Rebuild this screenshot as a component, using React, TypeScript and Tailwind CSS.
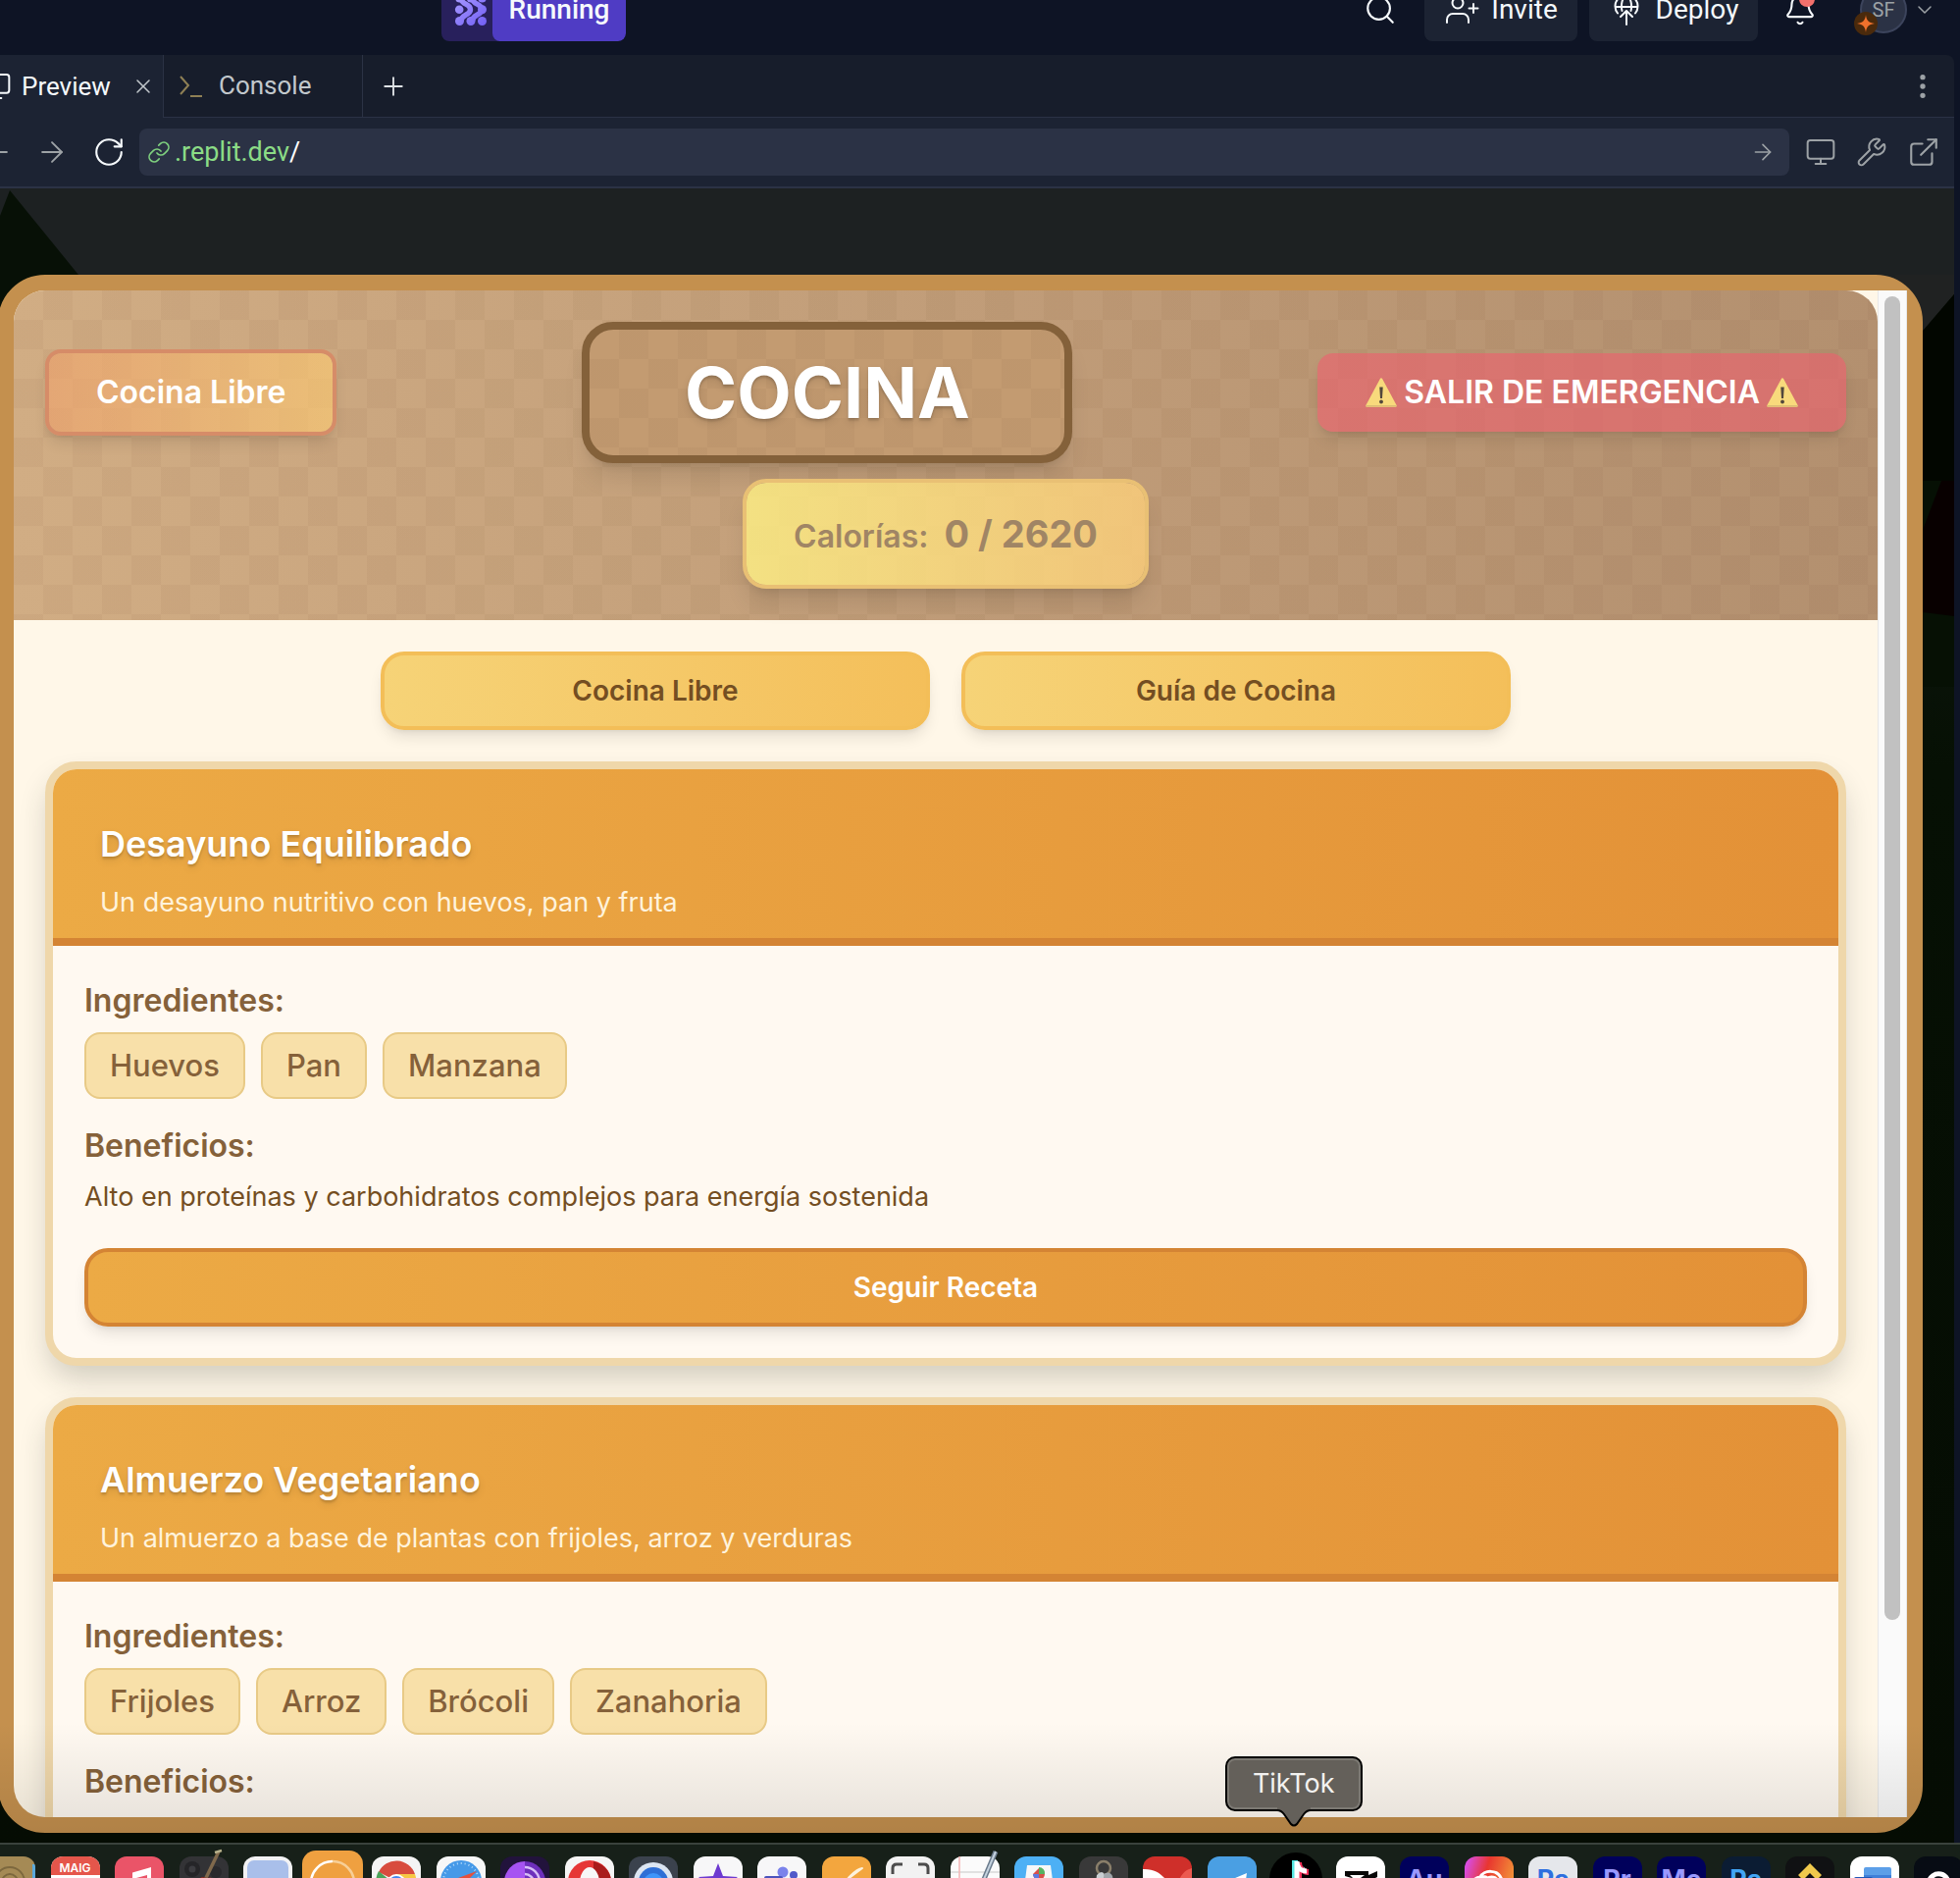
import React from "react";
import {
  ArrowLeft,
  ArrowRight,
  Bell,
  ChevronDown,
  ExternalLink,
  Link,
  Monitor,
  MoreVertical,
  Plus,
  RotateCw,
  Search,
  Wrench,
  X,
} from "lucide-react";

const CHECKER =
  "bg-[repeating-conic-gradient(rgba(80,40,10,0.04)_0_25%,transparent_0_50%)] bg-[length:60px_60px]";

/* ---------- editor chrome ---------- */

function RunLogo() {
  return (
    <svg viewBox="0 0 36 42" className="h-[42px] w-9" aria-hidden="true">
      <defs>
        <linearGradient id="runlogo" gradientUnits="userSpaceOnUse" x1="4" y1="10" x2="34" y2="42">
          <stop offset="0" stopColor="#a99bff" />
          <stop offset="1" stopColor="#7361f5" />
        </linearGradient>
      </defs>
      <g fill="url(#runlogo)">
        <circle cx="8.200" cy="25.700" r="4.300" />
        <circle cx="8.500" cy="37.500" r="4.500" />
        <circle cx="20" cy="37.500" r="4.500" />
        <circle cx="31.500" cy="37.500" r="4.500" />
        <circle cx="8.500" cy="14" r="4.500" />
        <circle cx="20" cy="14" r="4.500" />
        <circle cx="31.500" cy="14" r="4.500" />
        <circle cx="31.500" cy="25.700" r="4.500" />
      </g>
      <g stroke="url(#runlogo)" strokeWidth="5.400" fill="none">
        <path d="M10 37.500c0-7 9.500-5.500 9.500-11.800S10 21 10 14" />
        <path d="M21.500 37.500c0-7 9.500-5.500 9.500-11.800S21.500 21 21.500 14" />
      </g>
    </svg>
  );
}

function InviteIcon() {
  return (
    <svg viewBox="0 0 36 36" className="h-9 w-9 shrink-0" fill="none" stroke="currentColor" strokeWidth="2" strokeLinecap="round" strokeLinejoin="round" aria-hidden="true">
      <circle cx="14" cy="11" r="5.500" />
      <path d="M3 31v-3a6 6 0 0 1 6-6h10a6 6 0 0 1 6 6v3M30 12v9M25.500 16.500h9" />
    </svg>
  );
}

function DeployIcon() {
  return (
    <svg viewBox="0 0 36 36" className="h-9 w-9 shrink-0" fill="none" stroke="currentColor" strokeWidth="2" strokeLinecap="round" strokeLinejoin="round" aria-hidden="true">
      <path d="M9 21.500a11.500 11.500 0 1 1 18 0M7 15h22M13.500 19c-1.500-6 0-13 4.500-16.500 4.500 3.500 6 10.500 4.500 16.500M18 33V19M12 25l6-6 6 6" />
    </svg>
  );
}

function TopBar() {
  return (
    <header className="flex h-14 shrink-0 items-end overflow-hidden bg-[#0e1425] pb-3.5 pl-[450px] pr-6 font-[Roboto,sans-serif] text-[28px] text-[#f5f9fc]">
      <div className="flex h-16 shrink-0 overflow-hidden rounded-lg bg-[#28205c]">
        <span className="flex w-[52px] items-center justify-center pb-2.5 pl-1">
          <RunLogo />
        </span>
        <button className="w-[136px] rounded-lg bg-[#4f3cc4] font-medium">Running</button>
      </div>
      <div className="ml-auto flex h-16 items-center">
        <button aria-label="Search" className="mr-7">
          <Search size={34} strokeWidth={1.5} />
        </button>
        <button className="mr-3 flex h-16 w-[156px] items-center justify-center gap-3 rounded-lg bg-[#1c2333]">
          <InviteIcon />
          Invite
        </button>
        <button className="mr-[26px] flex h-16 w-[172px] items-center justify-center gap-3 rounded-lg bg-[#1c2333]">
          <DeployIcon />
          Deploy
        </button>
        <button aria-label="Notifications" className="relative mr-11">
          <Bell size={34} strokeWidth={1.5} />
          <span className="absolute right-0.5 -top-0.5 size-4 rounded-full bg-[#f2706c]" />
        </button>
        <button aria-label="Account" className="flex items-center gap-1.5 text-[#9da2a6]">
          <span className="relative flex size-12 items-center justify-center rounded-full border-2 border-[#3c445c] bg-[#2b3245] text-[20px]">
            SF
            <span className="absolute -bottom-1 -left-2 flex size-6 items-center justify-center rounded-full bg-[#4a2a0c]">
              <svg viewBox="0 0 18 18" className="size-[18px]" fill="#f0712c" aria-hidden="true">
                <path d="M9 0c.6 5.500 2.500 8 9 9-6.500 1-8.400 3.500-9 9-.6-5.500-2.500-8-9-9 6.500-1 8.400-3.500 9-9z" />
              </svg>
            </span>
          </span>
          <ChevronDown size={24} strokeWidth={1.5} />
        </button>
      </div>
    </header>
  );
}

function TabBar() {
  return (
    <nav className="flex h-16 shrink-0 rounded-tr-lg bg-[#171d2b] font-[Roboto,sans-serif] text-[26px]">
      <div className="flex w-[167px] shrink-0 items-center border-r border-[#2b3245] bg-[#1c2333] text-[#f5f9fc]">
        <Monitor size={32} strokeWidth={1.5} className="-ml-5 shrink-0" />
        <button className="ml-2.5">Preview</button>
        <button aria-label="Close tab" className="ml-auto mr-2 text-[#c2c8cc]">
          <X size={24} strokeWidth={1.5} />
        </button>
      </div>
      <div className="flex min-w-0 flex-1 border-b border-[#2b3245]">
        <button className="flex w-[203px] shrink-0 items-center gap-4 border-r border-[#2b3245] pl-4 text-[#c2c8cc]">
          <svg viewBox="0 0 24 24" className="size-6" fill="none" stroke="#8f8055" strokeWidth="2" aria-hidden="true">
            <path d="m1 2 8 9-8 9M11 22h12" />
          </svg>
          Console
        </button>
        <button aria-label="New tab" className="ml-4 text-[#dfe3e6]">
          <Plus size={30} strokeWidth={1.5} />
        </button>
        <button aria-label="More options" className="ml-auto mr-4 text-[#9da2a6]">
          <MoreVertical size={32} />
        </button>
      </div>
    </nav>
  );
}

function AddressBar() {
  return (
    <div className="flex h-[72px] shrink-0 items-center border-b-2 border-[#2b3245] bg-[#1c2333] text-[#9da2a6]">
      <button aria-label="Back" className="-ml-5">
        <ArrowLeft size={34} strokeWidth={1.3} />
      </button>
      <button aria-label="Forward" className="ml-[22px]">
        <ArrowRight size={34} strokeWidth={1.3} />
      </button>
      <button aria-label="Reload" className="ml-6 text-[#f5f9fc]">
        <RotateCw size={34} strokeWidth={1.5} />
      </button>
      <div className="ml-3.5 flex h-12 min-w-0 flex-1 items-center rounded-lg bg-[#2b3245] pl-2 pr-3.5 font-[Roboto,sans-serif] text-[27px]">
        <Link size={24} strokeWidth={1.7} className="text-[#7ecf7e]" />
        <span className="ml-1 text-[#8bdc86]">.replit.dev</span>
        <span className="text-white">/</span>
        <button aria-label="Go" className="ml-auto">
          <ArrowRight size={26} strokeWidth={1.5} />
        </button>
      </div>
      <div className="ml-4 mr-3.5 flex gap-5">
        <button aria-label="Device"><Monitor size={32} strokeWidth={1.5} /></button>
        <button aria-label="Tools"><Wrench size={32} strokeWidth={1.5} /></button>
        <button aria-label="Open in new tab"><ExternalLink size={34} strokeWidth={1.5} /></button>
      </div>
    </div>
  );
}

/* ---------- kitchen dialog ---------- */

function Warning() {
  return (
    <svg viewBox="0 0 34 32" className="h-8 w-[34px]" aria-hidden="true">
      <path d="M17 2.500 31.500 29.500h-29z" fill="#f8da7c" stroke="#f8da7c" strokeWidth="2.500" strokeLinejoin="round" />
      <path d="M1.500 29.800h31" stroke="#dcbc74" strokeWidth="1.500" />
      <path d="M15.300 10.500h3.400l-.7 11.500h-2z" fill="#52483c" />
      <circle cx="17" cy="25.500" r="1.900" fill="#52483c" />
    </svg>
  );
}

function KitchenHeader() {
  return (
    <div className={`${CHECKER} rounded-tr-[32px]`}>
      <div className="flex flex-col items-center gap-4 p-8">
        <div className="flex w-full items-center justify-between">
          <button className="rounded-2xl border-4 border-[#d68c68] bg-linear-to-r from-[#f1a36c]/60 to-[#ffcd71]/60 bg-clip-padding px-12 py-4 text-[32px] leading-[48px] font-semibold text-white shadow-lg">
            Cocina Libre
          </button>
          <h1 className={`${CHECKER} w-[500px] rounded-[32px] border-8 border-[#84613a] bg-[#c39b71] bg-clip-padding py-4 text-center text-[72px] leading-[96px] font-bold text-white shadow-xl text-shadow-lg`}>
            COCINA
          </h1>
          <button className="flex items-center gap-1.5 rounded-2xl bg-[#ee5f6e]/60 px-12 py-4 text-[32px] leading-[48px] font-semibold text-white shadow-lg">
            <Warning />
            SALIR DE EMERGENCIA
            <Warning />
          </button>
        </div>
        <div className="flex items-baseline gap-4 rounded-3xl border-4 border-[#e9c074] bg-linear-to-r from-[#fff184]/80 to-[#fdcf7b]/80 bg-clip-padding px-12 py-6 text-[#a08565] shadow-xl">
          <span className="text-[32px] leading-[48px] font-semibold">Calorías:</span>
          <span className="text-[38px] leading-[56px] font-bold">0 / 2620</span>
        </div>
      </div>
    </div>
  );
}

type Recipe = { title: string; summary: string; items: string[]; benefits: string };

const RECIPES: Recipe[] = [
  {
    title: "Desayuno Equilibrado",
    summary: "Un desayuno nutritivo con huevos, pan y fruta",
    items: ["Huevos", "Pan", "Manzana"],
    benefits: "Alto en proteínas y carbohidratos complejos para energía sostenida",
  },
  {
    title: "Almuerzo Vegetariano",
    summary: "Un almuerzo a base de plantas con frijoles, arroz y verduras",
    items: ["Frijoles", "Arroz", "Brócoli", "Zanahoria"],
    benefits: "",
  },
];

function RecipeCard({ title, summary, items, benefits }: Recipe) {
  return (
    <article className="overflow-hidden rounded-[32px] border-8 border-[#efd7aa] bg-[#fff9f1] shadow-[0_16px_30px_-4px_rgba(40,50,40,0.22)]">
      <div className="flex flex-col gap-3 border-b-8 border-[#d48434] bg-linear-to-r from-[#ecaa45] to-[#e39137] px-12 pt-12 pb-4">
        <h2 className="text-[36px] leading-[56px] font-semibold text-white text-shadow-lg">{title}</h2>
        <p className="text-[27px] leading-10 text-[#fff3dc]">{summary}</p>
      </div>
      <div className="p-8">
        <h3 className="text-[32px] leading-[48px] font-semibold text-[#85613a]">Ingredientes:</h3>
        <ul className="mt-2 flex flex-wrap gap-4">
          {items.map((item) => (
            <li key={item} className="rounded-2xl border-2 border-[#e8ca86] bg-[#f8e0a9] px-6 py-2 text-[31px] leading-[48px] font-medium text-[#85613a]">
              {item}
            </li>
          ))}
        </ul>
        <h3 className="mt-6 text-[32px] leading-[48px] font-semibold text-[#85613a]">Beneficios:</h3>
        <p className="mt-2 min-h-10 text-[27px] leading-10 text-[#744e22]">{benefits}</p>
        <button className="mt-8 w-full rounded-3xl border-4 border-[#d48434] bg-linear-to-r from-[#ecaa45] to-[#e39137] py-4 text-[28px] leading-10 font-semibold text-white shadow-lg">
          Seguir Receta
        </button>
      </div>
    </article>
  );
}

function KitchenDialog() {
  const choice =
    "h-20 rounded-3xl border-4 border-[#f3be58] bg-linear-to-r from-[#f6d377] to-[#f4bf5a] text-[28px] font-semibold text-[#744e22] shadow-lg";
  return (
    <section className="relative -ml-0.5 mr-8 mt-[88px] mb-2.5 flex min-h-0 flex-1 rounded-[48px] border-16 border-[#c4904e] bg-[#c4904e] font-[Inter,sans-serif]">
      <div className="min-w-0 flex-1 overflow-hidden rounded-l-[32px] bg-[#fff7e8]">
        <div className="rounded-tr-[32px] bg-linear-to-r from-[#d1ad84] via-[#c19d79] to-[#b3906f]">
          <KitchenHeader />
        </div>
        <div className="flex flex-col gap-8 p-8">
          <div className="mx-auto grid w-full max-w-[1152px] grid-cols-2 gap-8">
            <button className={choice}>Cocina Libre</button>
            <button className={choice}>Guía de Cocina</button>
          </div>
          {RECIPES.map((r) => (
            <RecipeCard key={r.title} {...r} />
          ))}
        </div>
      </div>
      <div className="w-[30px] shrink-0 border-x border-[#e8e8e8] bg-[#fafafa] pt-1.5">
        <div className="mx-auto h-[87%] w-4 rounded-full bg-[#c1c1c1]" />
      </div>
      <div className="pointer-events-none absolute -inset-x-4 -bottom-4 h-28 rounded-b-[48px] bg-linear-to-t from-black/10 to-transparent" />
    </section>
  );
}

function Stage() {
  return (
    <main className="relative flex min-h-0 flex-1 flex-col overflow-hidden bg-linear-to-b from-[#1c1f22] via-[#061004] via-35% to-[#050c03]">
      <svg className="absolute left-0 top-0 h-[160px] w-[120px]" viewBox="0 0 120 160" aria-hidden="true">
        <rect width="120" height="160" fill="#1d2122" />
        <path d="M10 2 106 120v40H0V28z" fill="#071006" />
      </svg>
      <div className="absolute left-[120px] right-0 top-0 h-[110px] bg-[#1d2122]" />
      <svg className="absolute right-0 top-[88px] h-[420px] w-[60px]" viewBox="0 0 60 420" aria-hidden="true">
        <rect width="60" height="420" fill="#061004" />
        <path d="M0 0h60v20L0 90z" fill="#202222" />
        <path d="M60 20v190H0V90z" fill="#020600" />
        <path d="M47 210h13v138l-32-4v-84z" fill="#080000" />
      </svg>
      <KitchenDialog />
    </main>
  );
}

/* ---------- dock ---------- */

function Tile({ bg, children }: { bg: string; children?: React.ReactNode }) {
  return (
    <svg viewBox="0 0 50 50" className="size-[50px] shrink-0 overflow-hidden rounded-xl" aria-hidden="true">
      <rect width="50" height="50" fill={bg} />
      {children}
    </svg>
  );
}

function LetterTile({ className, children }: { className: string; children: React.ReactNode }) {
  return (
    <span className={`flex size-[50px] shrink-0 justify-center rounded-xl pt-2 text-[27px] leading-8 font-bold ${className}`}>
      {children}
    </span>
  );
}

function Dock() {
  return (
    <footer className="relative h-9 shrink-0 border-t-2 border-[#3a423c] bg-[#172019] font-[Inter,sans-serif]">
      <div className="absolute inset-x-0 top-0 h-[34px] overflow-hidden">
        <div className="-ml-3.5 -mr-[3px] flex justify-between pt-3">
          <Tile bg="#a58a55">
            <circle cx="24" cy="26" r="15" fill="none" stroke="#7d683e" strokeWidth="2" />
            <circle cx="24" cy="26" r="8" fill="none" stroke="#7d683e" strokeWidth="2" />
            <path d="M47 8h3v42h-3z" fill="#5aa9dc" />
          </Tile>
          <span className="flex size-[50px] shrink-0 flex-col items-center overflow-hidden rounded-xl bg-white">
            <span className="h-[19px] w-full bg-[#e5564b] pt-1 text-center text-[12px] leading-[15px] font-semibold text-white">MAIG</span>
            <span className="text-[26px] leading-7 text-[#333]">18</span>
          </span>
          <Tile bg="#ea5468">
            <path d="M18 16.500 37 11v26h-4V19l-11 3v20h-4z" fill="#fff" />
          </Tile>
          <svg viewBox="0 0 50 58" className="-mt-2 h-[58px] w-[50px] shrink-0" aria-hidden="true">
            <rect y="8" width="50" height="50" rx="12" fill="#333336" />
            <circle cx="13" cy="21" r="8" fill="#252528" />
            <circle cx="13" cy="21" r="3.500" fill="#3d3d41" />
            <circle cx="37" cy="24" r="6" fill="#29292c" />
            <path d="m40 3-14 29" stroke="#80694c" strokeWidth="3.500" />
            <path d="m36 4 7-2" stroke="#b8b28c" strokeWidth="2.500" />
            <path d="M20 32c2-5 6-2 8-2s6-2 5 3l3 25H18z" fill="#8e2e22" />
          </svg>
          <Tile bg="#f2f2f4">
            <rect x="4" y="4" width="42" height="50" rx="7" fill="#a9bfea" />
          </Tile>
          <svg viewBox="0 0 62 62" className="-mx-1.5 -mt-1.5 size-[62px] shrink-0" aria-hidden="true">
            <rect width="62" height="62" rx="14" fill="#efa040" />
            <path d="M9 34a22 22 0 0 1 22-23" fill="none" stroke="#fff" strokeWidth="2.500" />
            <path d="M31 11a22 22 0 0 1 22 23" fill="none" stroke="#f7cf98" strokeWidth="2.500" />
            <rect x="19" y="29" width="17" height="16" rx="3" fill="#fff" />
            <path d="m37 34 7-5v16l-7-6z" fill="#fff" />
          </svg>
          <Tile bg="#f4f4f4">
            <path d="M25 25 7 16A20 20 0 0 1 44 18H25z" fill="#d84c3e" />
            <path d="M7 15a20 20 0 0 0 15 30l6-18-10-3z" fill="#4ba45a" />
            <path d="M25 18h19a20 20 0 0 1-21 27z" fill="#f6c844" />
            <circle cx="25" cy="28" r="10" fill="#fff" />
            <circle cx="25" cy="28" r="8" fill="#4486ee" />
          </Tile>
          <Tile bg="#f7f7f7">
            <circle cx="25" cy="25" r="21" fill="#4599e8" />
            <circle cx="25" cy="25" r="18" fill="none" stroke="#b6dcfa" strokeWidth="2" strokeDasharray="1 3" />
            <path d="M41 15 22 22l6 6z" fill="#e5503c" />
            <path d="m22 22 6 6-18 11z" fill="#eee" />
          </Tile>
          <Tile bg="#22133c">
            <path d="M25 5a21 21 0 0 0 0 42z" fill="#a653f2" />
            <path d="M25 5a21 21 0 0 1 0 42z" fill="#6e2fbc" />
            <path d="M25 11a15 15 0 0 1 15 15M25 18a9 9 0 0 1 9 9" fill="none" stroke="#d6bcf7" strokeWidth="2.500" />
          </Tile>
          <Tile bg="#f5f5f5">
            <circle cx="25" cy="26" r="22" fill="#e63636" />
            <path d="M29 5c24 6 24 36 0 42z" fill="#a91c1c" />
            <ellipse cx="25" cy="27" rx="10" ry="16" fill="#f7f7f7" />
          </Tile>
          <Tile bg="#3b424d">
            <circle cx="25" cy="26" r="20" fill="#dbe5f2" />
            <circle cx="25" cy="26" r="15" fill="#2e6fd6" />
            <circle cx="25" cy="27" r="10" fill="#3f95fa" />
            <circle cx="25" cy="29" r="3.500" fill="#e8f4ff" />
          </Tile>
          <Tile bg="#f7f7f8">
            <path d="m25 7 5 13 15 1-12 9 4 15-12-8-12 8 4-15-12-9 15-1z" fill="#6d3ad0" />
          </Tile>
          <Tile bg="#f7f7f8">
            <circle cx="26" cy="16" r="5.500" fill="#7b83eb" />
            <circle cx="37" cy="19" r="4" fill="#5059c9" />
            <path d="M21 23h21v20H21z" fill="#7b83eb" />
            <rect x="7" y="20" width="19" height="22" rx="2" fill="#4b53bc" />
            <path d="M12 26h9M16.500 26v12" stroke="#fff" strokeWidth="2.500" />
          </Tile>
          <Tile bg="#f3a63e">
            <path d="M41 12c-7 1-17 12-22 21l-7-5 9-1z" fill="#fdf2dc" stroke="#fdf2dc" strokeWidth="2" strokeLinejoin="round" />
          </Tile>
          <Tile bg="#f2f2f2">
            <path d="M7 18v-6q0-4 4-4h6M33 8h6q4 0 4 4v6" fill="none" stroke="#4c4c4c" strokeWidth="3" />
            <path d="M13 27h6l3-5h6l3 5h6v20H13z" fill="#4c4c4c" />
            <circle cx="25" cy="34" r="6" fill="#ddd" />
          </Tile>
          <svg viewBox="0 0 50 58" className="-mt-2 h-[58px] w-[50px] shrink-0" aria-hidden="true">
            <rect y="8" width="50" height="50" rx="12" fill="#fbfbfb" />
            <path d="M0 24h50M0 33h50" stroke="#d9d9d9" strokeWidth="1.500" />
            <path d="M9 8v50" stroke="#f3b4b4" strokeWidth="1.500" />
            <path d="M46 3 32 36" stroke="#6a7a8c" strokeWidth="5" />
            <path d="M46 3 32 36" stroke="#c5d3df" strokeWidth="2" />
          </svg>
          <Tile bg="#4db0f5">
            <path d="M13 9h24l4 30H9z" fill="#f6f7f8" />
            <path d="M25 12a6 6 0 1 1-6 6z" fill="#d8504a" />
            <path d="M25 11a6 6 0 0 1 6 7h-6z" fill="#55b463" />
            <path d="M19 18a6 6 0 0 0 6 6v-6z" fill="#5c7ae0" />
            <path d="M14 27h22" stroke="#4d6f9a" strokeWidth="2" />
          </Tile>
          <Tile bg="#393939">
            <circle cx="25" cy="12" r="7" fill="none" stroke="#8a7f6a" strokeWidth="2.500" />
            <path d="M18 19q6-6 8 0l-3 27h-8z" fill="#c9ced1" />
            <path d="M25 18q6-4 9 2l5 26h-9z" fill="#9fa5a9" />
          </Tile>
          <Tile bg="#cf2f2a">
            <path d="M0 13c16-1 25 10 29 21l11-8-5 24H22C20 32 10 23 0 23z" fill="#fff" />
            <path d="M50 12c-8 2-12 8-14 15l14-3z" fill="#ec5a50" />
          </Tile>
          <Tile bg="#4a9fe3">
            <path d="M40 17 9 30l9 4 3 10 6-6 9 7z" fill="#fff" />
          </Tile>
          <svg viewBox="0 0 54 54" className="-mx-0.5 -mt-1 size-[54px] shrink-0" aria-hidden="true">
            <circle cx="27" cy="27" r="27" fill="#000" />
            <path d="M26 8v27a5 5 0 1 1-5-5M26 8c0 6 4 10 10 10" fill="none" stroke="#55e7e2" strokeWidth="6" />
            <path d="M30 10v27a5 5 0 1 1-5-5M30 10c0 6 4 10 10 10" fill="none" stroke="#f5315a" strokeWidth="6" />
            <path d="M28 9v27a5 5 0 1 1-5-5M28 9c0 6 4 10 10 10" fill="none" stroke="#fff" strokeWidth="5" />
          </svg>
          <Tile bg="#fff">
            <path d="M9 15h24v4l9-4v6L9 37v-6h24v-4L9 20z" fill="#080808" />
            <path d="M14 19h15l-4 3H17z" fill="#fff" />
          </Tile>
          <LetterTile className="bg-[#00005b] text-[#9999ff]">Au</LetterTile>
          <Tile bg="url(#cloud)">
            <defs>
              <linearGradient id="cloud" x1="0" y1="0.300" x2="1" y2="0.600">
                <stop offset="0" stopColor="#d84ce0" />
                <stop offset="0.400" stopColor="#e8362f" />
                <stop offset="1" stopColor="#f39a38" />
              </linearGradient>
            </defs>
            <path d="M17 40a9 9 0 0 1-1-19c3-7 18-9 22 3 7 5 3 16-4 16M16 21c7-2 10 3 13 8M22 24c4-5 11-3 12 2" fill="none" stroke="#fff" strokeWidth="3" />
          </Tile>
          <LetterTile className="bg-[#e5e7eb] text-[#2e6fdf]">Ps</LetterTile>
          <LetterTile className="bg-[#00005b] text-[#9999ff]">Pr</LetterTile>
          <LetterTile className="bg-[#00005b] text-[#9999ff]">Me</LetterTile>
          <LetterTile className="bg-[#0b1c33] text-[#42a5f5]">Ps</LetterTile>
          <Tile bg="#101113">
            <path d="m25 7 12 12-5 5-7-7-7 7-5-5z" fill="#f0c94c" />
            <path d="m25 22 5 5-5 5-5-5zM8 26l4 4-4 4zM42 26l-4 4 4 4z" fill="#f0c94c" />
          </Tile>
          <Tile bg="#fff">
            <rect x="14" y="11" width="28" height="32" rx="2" fill="#5c9fe8" />
            <path d="M14 19h28v9H14z" fill="#3f7fd8" />
            <rect x="4" y="21" width="19" height="20" rx="2" fill="#1f57b8" />
            <path d="m8 25 2.500 10 3-9 3 9L19 25" fill="none" stroke="#fff" strokeWidth="2" />
          </Tile>
          <Tile bg="#070c14">
            <path d="M34 23a10 10 0 1 0-1 11" fill="none" stroke="#fff" strokeWidth="5" />
          </Tile>
        </div>
      </div>
      <div role="tooltip" className="absolute -top-[90px] left-[66%] -translate-x-1/2">
        <div className="flex h-14 w-[140px] items-center justify-center rounded-[10px] border-2 border-black bg-[#64605a] text-[27px] text-[#f3f2f0] inset-ring-2 inset-ring-[#7c7973]">
          TikTok
        </div>
        <svg viewBox="0 0 40 20" className="absolute left-[50px] top-[52px] h-5 w-10" aria-hidden="true">
          <path d="M3 0h34v3q-4 0-7 4l-7 10q-3 3-6 0L10 7Q7 3 3 3z" fill="#64605a" />
          <path d="M0 3h3q4 0 7 4l7 10q3 3 6 0l7-10q3-4 7-4h3" fill="none" stroke="#000" strokeWidth="2" />
        </svg>
      </div>
    </footer>
  );
}

export default function App() {
  return (
    <div className="flex h-screen flex-col overflow-hidden bg-[#0e1425]">
      <TopBar />
      <div className="mr-1.5 flex min-h-0 flex-1 flex-col">
        <TabBar />
        <AddressBar />
        <Stage />
      </div>
      <Dock />
    </div>
  );
}
